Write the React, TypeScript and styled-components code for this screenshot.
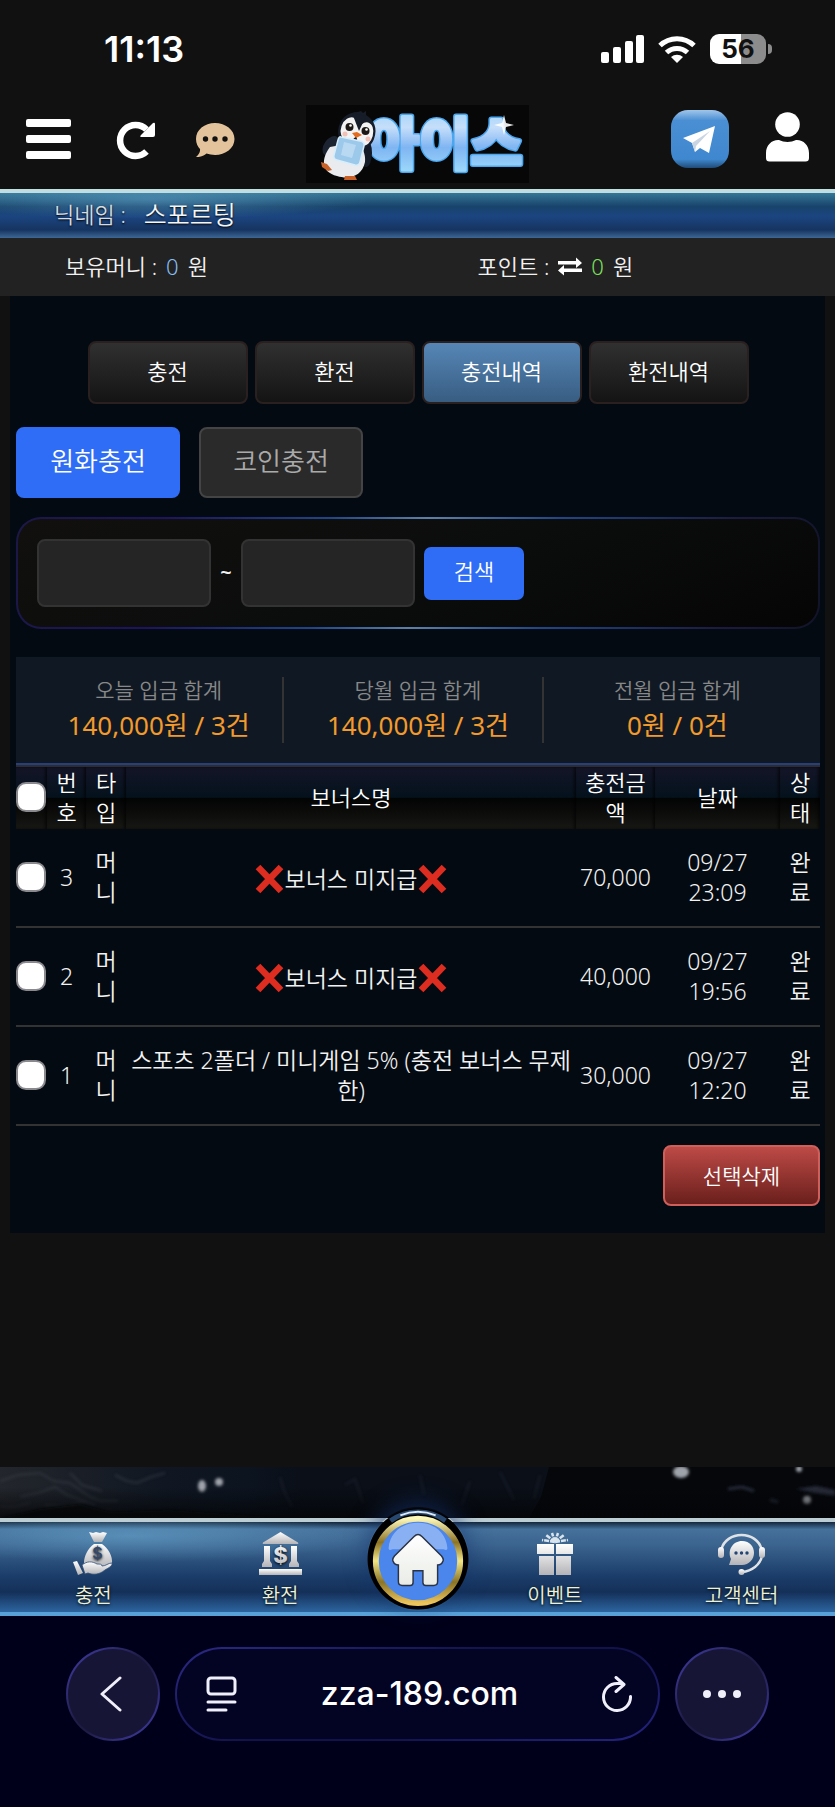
import { useState } from "react";
import styled, { createGlobalStyle } from "styled-components";

const GlobalStyle = createGlobalStyle`
  * {
    box-sizing: border-box;
  }
  body {
    margin: 0;
    background: #111111;
    color: #f2f2f2;
    font-family: "Noto Sans", "Noto Sans CJK KR", sans-serif;
    font-size: 22px;
    font-weight: 350;
    line-height: 30px;
  }
  button, input {
    font: inherit;
    color: inherit;
    padding: 0;
  }
  button {
    cursor: pointer;
  }
  a {
    color: inherit;
    text-decoration: none;
  }
  svg {
    display: block;
    flex: none;
  }
`;

const Page = styled.div`
  display: flex;
  flex-direction: column;
  min-height: 100vh;
`;

/* phone status bar */

const StatusBar = styled.div`
  display: flex;
  align-items: center;
  justify-content: space-between;
  height: 98px;
  padding: 0 63px 0 104px;
  font-family: Inter, sans-serif;
  color: white;
`;

const Clock = styled.span`
  font-size: 36px;
  font-weight: 600;
`;

const StatusIcons = styled.div`
  display: flex;
  align-items: center;
  gap: 14px;
`;

const Battery = styled.div`
  display: flex;
  align-items: center;
  gap: 2px;
`;

const BatteryBody = styled.span`
  width: 56px;
  height: 30px;
  border-radius: 9px;
  background: linear-gradient(90deg, white 56%, #8c8c8c 56%);
  color: #111111;
  font-size: 26px;
  font-weight: 700;
  line-height: 30px;
  text-align: center;
`;

const BatteryTip = styled.span`
  width: 4px;
  height: 10px;
  border-radius: 0 4px 4px 0;
  background: #8c8c8c;
`;

/* site header */

const Header = styled.header`
  display: grid;
  grid-template-columns: 1fr auto 1fr;
  align-items: center;
  height: 91px;
  padding: 0 26px;
`;

const HeaderSide = styled.div<{ $end?: boolean; $gap: number }>`
  display: flex;
  align-items: center;
  justify-content: ${(p) => (p.$end ? "flex-end" : "flex-start")};
  gap: ${(p) => p.$gap}px;
  padding-bottom: 10px;
`;

const IconButton = styled.button`
  display: flex;
  border: none;
  background: none;
`;

const Logo = styled.a`
  display: block;
  background: #070707;
  svg {
    overflow: visible;
  }
`;

const UserBar = styled.div`
  display: flex;
  align-items: center;
  gap: 18px;
  height: 49px;
  padding: 0 54px 3px;
  border-top: 4px solid #c0dde2;
  background:
    radial-gradient(ellipse 220px 20px at 150px 6px, rgba(100, 165, 205, 0.5), transparent),
    linear-gradient(#357796, #18436a 30%, #1b4580 52%, #163460 82%, #3d6795);
  color: #d6dbe0;
  text-shadow: 0 1px 2px black;
`;

const Nickname = styled.span`
  font-size: 25px;
  color: #f4f6f8;
`;

const MoneyBar = styled.div`
  display: grid;
  grid-template-columns: 1fr 1fr;
  height: 58px;
  padding-bottom: 2px;
  background: #222222;
`;

const Money = styled.div<{ $inset: number }>`
  display: flex;
  align-items: center;
  gap: 9px;
  padding-left: ${(p) => p.$inset}px;
`;

const Amount = styled.span<{ $color: string }>`
  color: ${(p) => p.$color};
`;

/* content panel */

const Panel = styled.main`
  margin: 0 10px;
  padding: 45px 5px 27px 6px;
  background: #030a11;
`;

const Tabs = styled.nav`
  display: flex;
  gap: 7px;
  justify-content: center;
`;

const Tab = styled.button<{ $active: boolean }>`
  flex: 0 1 160px;
  height: 63px;
  padding-bottom: 4px;
  border: 2px solid #2a2020;
  border-radius: 8px;
  background: ${(p) =>
    p.$active ? "linear-gradient(#5686b6, #385d82)" : "linear-gradient(#303030, #141414)"};
  color: white;
`;

const Kinds = styled.div`
  display: flex;
  gap: 19px;
  margin-top: 23px;
`;

const Kind = styled.button<{ $active: boolean }>`
  width: 164px;
  height: 71px;
  padding-bottom: 4px;
  border: 2px solid ${(p) => (p.$active ? "#2f6df6" : "#444444")};
  border-radius: 8px;
  background: ${(p) => (p.$active ? "#2f6df6" : "#2a2a2a")};
  color: ${(p) => (p.$active ? "white" : "#aaaaaa")};
  font-size: 26px;
`;

const Search = styled.form`
  display: flex;
  align-items: center;
  gap: 9px;
  height: 112px;
  margin-top: 19px;
  padding: 0 19px;
  border: 2px solid transparent;
  border-radius: 25px;
  background:
    linear-gradient(160deg, #11100e, #0b0d0c 50%, #050505) padding-box,
    linear-gradient(100deg, #1b1846, #1d1460 18%, #1f4588 38%, #5c81a8 50%, #214687 66%, #1c1b3f 88%, #111428) border-box;
`;

const DateInput = styled.input`
  width: 174px;
  height: 68px;
  border: 2px solid #333333;
  border-radius: 8px;
  background: #252525;
  text-align: center;
`;

const Tilde = styled.span`
  width: 12px;
  font-size: 20px;
  font-weight: 600;
  text-align: center;
`;

const SearchButton = styled.button`
  width: 100px;
  height: 53px;
  padding-bottom: 4px;
  border: none;
  border-radius: 7px;
  background: #2f6df6;
  color: white;
`;

const Summary = styled.dl`
  display: grid;
  grid-template-columns: repeat(3, 1fr);
  height: 108px;
  margin: 28px 0 0;
  padding: 20px 13px;
  border-bottom: 2px solid #27407a;
  background: #101923;
  text-align: center;
`;

const Sum = styled.div`
  display: flex;
  flex-direction: column;
  gap: 3px;
  height: 66px;
  margin-right: 4px;
  padding-left: 6px;
  border-right: 2px solid #333333;
  &:last-child {
    border-color: transparent;
  }
`;

const SumLabel = styled.dt`
  height: 28px;
  font-size: 21px;
  line-height: 26px;
  color: #888888;
`;

const SumValue = styled.dd`
  margin: 0;
  color: #f39a2c;
  font-size: 26px;
  font-weight: 400;
  line-height: 34px;
`;

const Table = styled.table`
  width: 100%;
  border-collapse: separate;
  border-spacing: 0;
  table-layout: fixed;
  text-align: center;
  word-break: break-all;
`;

const HeadCell = styled.th<{ $width?: number; $tight?: boolean }>`
  width: ${(p) => (p.$width ? p.$width + "px" : "auto")};
  height: 64px;
  padding: 0 ${(p) => (p.$tight ? 0 : 5)}px 2px;
  border-top: 2px solid #2c2c33;
  background: linear-gradient(#141528, #04121c 49%, #020303 50%, #171714);
  box-shadow: inset -2px 0 3px rgba(0, 0, 0, 0.6);
  color: white;
  font-weight: 350;
`;

const Cell = styled.td<{ $tight?: boolean }>`
  height: 99px;
  padding: 0 ${(p) => (p.$tight ? 0 : 5)}px 2px;
  border-bottom: 2px solid #333333;
  font-size: 23px;
  vertical-align: middle;
`;

const Bonus = styled.span`
  display: flex;
  align-items: center;
  justify-content: center;
  padding-top: 5px;
`;

const Check = styled.input`
  display: block;
  width: 30px;
  height: 30px;
  margin: 0;
  appearance: none;
  border: 2px solid #8a8a8e;
  border-radius: 10px;
  background: white;
  &:checked {
    background: #2f6df6;
  }
`;

const Actions = styled.div`
  display: flex;
  justify-content: flex-end;
  margin-top: 19px;
`;

const DeleteButton = styled.button`
  width: 157px;
  height: 61px;
  border: 2px solid #cf5f5b;
  border-radius: 8px;
  background: linear-gradient(#bd4a46, #6a1f1c);
  color: white;
  font-size: 21px;
`;

/* bottom navigation */

const Scenery = styled.div`
  height: 51px;
  margin-top: auto;
  overflow: hidden;
  background: #05070b;
`;

const BottomNav = styled.nav`
  position: relative;
  display: grid;
  grid-template-columns: 1fr 1fr 88px 1fr 1fr;
  height: 98px;
  border-top: 4px solid #bccdd3;
  border-bottom: 4px solid #58a1d8;
  background:
    radial-gradient(ellipse 240px 26px at 130px 14px, rgba(110, 175, 215, 0.5), transparent),
    linear-gradient(#14263c, #45719b 8%, #3b648f 25%, #1b3d69 60%, #143059 78%, #2c659f);
`;

const NavItem = styled.a`
  display: flex;
  flex-direction: column;
  align-items: center;
  gap: 6px;
  padding-top: 10px;
  color: #edf2d6;
  font-size: 20px;
  text-shadow: 0 1px 3px black;
`;

const HomeLink = styled.a`
  position: absolute;
  top: -15px;
  left: 50%;
  margin-left: -51px;
  border-radius: 50%;
  box-shadow: 0 -6px 22px rgba(20, 50, 110, 0.6);
`;

/* browser chrome */

const BrowserBar = styled.div`
  display: flex;
  gap: 15px;
  height: 191px;
  padding: 31px 66px 0;
  background: #00001a;
  color: #f0f0fa;
`;

const RoundButton = styled.button`
  display: flex;
  flex: none;
  align-items: center;
  justify-content: center;
  width: 94px;
  height: 94px;
  border: 2px solid transparent;
  border-radius: 50%;
  background:
    linear-gradient(#171536, #171536) padding-box,
    linear-gradient(135deg, #4540b0, #1e1b44 45%, #1e1b44 55%, #4540b0) border-box;
`;

const Address = styled.div`
  display: flex;
  flex: 1;
  align-items: center;
  height: 94px;
  padding: 0 26px 0 29px;
  border: 2px solid transparent;
  border-radius: 47px;
  background:
    linear-gradient(#030324, #030324) padding-box,
    linear-gradient(160deg, #2c2a85, #13124a 45%, #13124a 60%, #252480) border-box;
`;

const Url = styled.span`
  flex: 1;
  color: white;
  font-family: Inter, sans-serif;
  font-size: 32px;
  font-weight: 500;
  text-align: center;
`;

const SignalIcon = () => (
  <svg width="43" height="28" fill="white">
    <rect x="0" y="17" width="8" height="11" rx="2" />
    <rect x="12" y="12" width="8" height="16" rx="2" />
    <rect x="24" y="6" width="8" height="22" rx="2" />
    <rect x="35" y="0" width="8" height="28" rx="2" />
  </svg>
);

const WifiIcon = () => (
  <svg width="38" height="28" viewBox="0 0 38 28" fill="none" stroke="white" strokeWidth="5">
    <path d="M2 10.500a24.500 24.500 0 0 1 34 0" />
    <path d="M8.500 17.500a15.500 15.500 0 0 1 21 0" />
    <path d="M13 22a9.500 9.500 0 0 1 12 0L19 28z" fill="white" stroke="none" />
  </svg>
);

const MenuIcon = () => (
  <svg width="45" height="40" fill="white">
    <rect y="0" width="45" height="8" rx="2" />
    <rect y="16" width="45" height="8" rx="2" />
    <rect y="32" width="45" height="8" rx="2" />
  </svg>
);

const ReloadIcon = () => (
  <svg width="43" height="44" viewBox="-4 -4 43 44">
    <path d="M30.500 8.500a15.500 15.500 0 1 0 0 22" fill="none" stroke="white" strokeWidth="6.500" />
    <path d="M37 2q2-1 2 1v11q0 2-2 2H26q-3 0-1-2z" fill="white" />
  </svg>
);

const ChatIcon = () => (
  <svg width="40" height="36" viewBox="1 -1 40 36">
    <path
      d="M20 1C9.500 1 1 7.800 1 17c0 4.500 2 8 4 10 .5 3-1.500 6-4 8 4.500.3 8-1 10.500-3.400C14 32.500 17 33 20 33c10.500 0 19.500-6.800 19.500-16S30.500 1 20 1z"
      fill="#e3c39c"
    />
    <circle cx="10.500" cy="17" r="2.700" fill="#111111" />
    <circle cx="20" cy="17" r="2.700" fill="#111111" />
    <circle cx="30" cy="17" r="2.700" fill="#111111" />
  </svg>
);

const PersonIcon = () => (
  <svg width="43" height="54" viewBox="0 0 43 54" fill="white">
    <circle cx="21.500" cy="12.500" r="12.300" />
    <path d="M13 28c5 2.600 12 2.600 17 0 7-.5 13 5 13 13v5q0 3.500-3.500 3.500h-36Q0 49.500 0 46v-5c0-8 6-13.500 13-13z" />
  </svg>
);

const TelegramIcon = () => (
  <svg width="58" height="58" viewBox="0 0 58 58">
    <defs>
      <linearGradient id="tg" x2="0" y2="1">
        <stop offset="0" stopColor="#a0c6ea" />
        <stop offset=".18" stopColor="#4a8fd3" />
        <stop offset=".85" stopColor="#3f87cf" />
        <stop offset="1" stopColor="#204b78" />
      </linearGradient>
    </defs>
    <rect width="58" height="58" rx="17" fill="url(#tg)" />
    <path d="M12 28l32-12-6 27-9-5-5 4-3-9z" fill="white" />
    <path d="M21 33l18-12-14 15-1 6z" fill="#c9d5e2" />
  </svg>
);

const SwapIcon = () => (
  <svg width="24" height="19" viewBox="0 0 24 19" fill="white">
    <path d="M0 4h18V.5L24 6l-6 5V7.500H0z" />
    <path d="M24 11.500H6V8L0 13.500l6 5V15h18z" />
  </svg>
);

const CrossIcon = () => (
  <svg width="31" height="30" viewBox="0 0 31 30" role="img" aria-label="❌">
    <path d="M4 3l23 24M27 3L4 27" stroke="#dd2c20" strokeWidth="6.500" />
  </svg>
);

const LogoArt = () => (
  <svg width="223" height="78" viewBox="0 0 223 78" role="img" aria-label="아이스">
    <defs>
      <linearGradient id="ice" x2="0" y2="1">
        <stop offset="0" stopColor="#8fd0fb" />
        <stop offset=".35" stopColor="#c5defa" />
        <stop offset=".6" stopColor="#7fb5f2" />
        <stop offset="1" stopColor="#a7e4fd" />
      </linearGradient>
    </defs>
    <g
      fontFamily="'Noto Sans CJK KR', sans-serif"
      fontSize="56"
      fontWeight="900"
      strokeLinejoin="round"
      textAnchor="middle"
    >
      <text x="139" y="59" fill="#3c93e2" stroke="#4aa6ee" strokeWidth="6">아이스</text>
      <text x="139" y="59" fill="url(#ice)" stroke="url(#ice)" strokeWidth="3" aria-hidden="true">아이스</text>
    </g>
    <path d="M198 10l2 8 8 2-8 2-2 8-2-8-8-2 8-2z" fill="white" opacity=".9" />
    {/* penguin holding an ice cube */}
    <ellipse cx="25" cy="41" rx="7" ry="11" fill="#1c2431" transform="rotate(35 25 41)" />
    <ellipse cx="60" cy="48" rx="6" ry="14" fill="#141b27" />
    <path d="M24 42c-9 12-9 25 7 29 13 4 25 0 28-14 1-8-3-16-8-20z" fill="#e9ebee" />
    <path d="M32 27C33 13 42 7 52 7l3-1 2 2 3-2v4c8 5 12 13 8 24-4 10-13 12-22 8-8-3-14-8-14-15z" fill="#161c28" />
    <ellipse cx="44" cy="24" rx="9" ry="12" fill="#f3f3f4" transform="rotate(20 44 24)" />
    <ellipse cx="59" cy="29" rx="8" ry="12" fill="#f3f3f4" transform="rotate(15 59 29)" />
    <path d="M46 8l14 3-7 15z" fill="#161c28" />
    <circle cx="43.500" cy="22" r="4" fill="#1d1715" />
    <circle cx="59.500" cy="26" r="4" fill="#1d1715" />
    <circle cx="44.500" cy="20.500" r="1.300" fill="white" />
    <circle cx="60.500" cy="24.500" r="1.300" fill="white" />
    <circle cx="39" cy="29" r="2.500" fill="#f3c0b5" />
    <circle cx="62" cy="34" r="2.500" fill="#f3c0b5" />
    <path d="M46 28l5-1 5 3-6 3z" fill="#e36b1e" />
    <path d="M35 32l19 4q5 1 4 5l-4 16q-1 4-5 3l-18-5q-4-1-3-5l4-15q1-4 3-3z" fill="#9cc8ea" stroke="#d6edfb" strokeWidth="1.500" />
    <path d="M38 37l12 3-4 13-11-3z" fill="#b9d9f2" />
    <path d="M15 57l6 2 5 6-4 1-6-4z" fill="#c8622a" />
    <path d="M39 71h10l2 4H38z" fill="#c8622a" />
  </svg>
);

const IceScene = () => (
  <svg width="100%" height="51" viewBox="0 0 835 51" preserveAspectRatio="none">
    <defs>
      <linearGradient id="cliff" x2="1">
        <stop offset="0" stopColor="#23262c" />
        <stop offset=".3" stopColor="#101722" />
        <stop offset=".45" stopColor="#0c1420" />
        <stop offset=".55" stopColor="#0a0f18" />
      </linearGradient>
      <linearGradient id="shade" x2="0" y2="1">
        <stop offset=".4" stopColor="#030406" stopOpacity="0" />
        <stop offset="1" stopColor="#030406" stopOpacity=".8" />
      </linearGradient>
      <filter id="soft">
        <feGaussianBlur stdDeviation="1.500" />
      </filter>
    </defs>
    <path d="M0 0h549l-8 30-12 21H0z" fill="url(#cliff)" />
    <g filter="url(#soft)" stroke="#3c424c" strokeWidth="2" fill="none" opacity=".5">
      <path d="M0 14l18-6 22-2 14 8 16 2 20 14 10 4 18 0M20 30l18-4 17-6 12 8 28 10M115 8l12 6 10 2 14-6 14-4M0 40l14 0 16-4M70 6l12 12 20 6M45 38l22 2 20-6" />
      <path d="M280 10l4 14 8 16M345 18l10-6 8 24M500 5l6 12 8 16M470 14l-8 24M420 8l4 20M540 8l-6 24" strokeOpacity=".5" />
    </g>
    <path d="M0 51l40-9 40-5 30 8 60-2 120 8z" fill="#07090c" filter="url(#soft)" />
    <g filter="url(#soft)" fill="#9fa3aa">
      <ellipse cx="202" cy="19" rx="4" ry="6" />
      <circle cx="219" cy="15" r="4" />
      <ellipse cx="681" cy="5" rx="8" ry="6" />
      <circle cx="799" cy="2" r="3" />
      <circle cx="807" cy="33" r="4" />
      <path d="M796 22l20-3 19 4v6l-20-3z" fill="#252a38" />
      <path d="M728 22l14-2 12 4M770 33l8 2" fill="none" stroke="#252a38" strokeWidth="3" />
    </g>
    <path d="M0 0h835v51H0z" fill="url(#shade)" />
  </svg>
);

const IconFill = () => (
  <svg width="0" height="0" aria-hidden="true">
    <defs>
      <linearGradient id="silver" x2="0" y2="1">
        <stop offset="0" stopColor="#ffffff" />
        <stop offset="1" stopColor="#b4b4b8" />
      </linearGradient>
    </defs>
  </svg>
);

const DepositIcon = () => (
  <svg width="40" height="43" viewBox="0 0 40 43" fill="url(#silver)">
    <path d="M16 0l4 1 3-1 4 1 3-1 4 1-5 9H21z" />
    <path d="M21 12h8c6 4 11 12 10 20-5 1-8 5-14 3-6-1-13 0-14-4 0-7 4-15 10-19z" />
    <path
      d="M9 33c5-4 10-4 15-1 3 0 5 0 5 2 4 0 6-3 10-3 1 3-4 5-7 7-6 5-12 5-17 3l-3 1z"
      stroke="#2c4c77"
      strokeWidth=".8"
    />
    <path d="M0 30l4-1 6 12-5 2z" />
    <text x="24.500" y="27" fill="#33486a" fontFamily="Inter, sans-serif" fontSize="16" fontWeight="600" textAnchor="middle">$</text>
  </svg>
);

const WithdrawIcon = () => (
  <svg width="43" height="43" viewBox="0 0 43 43" fill="url(#silver)">
    <path d="M21.500 0L39 10.500q1 1.500-1 1.500H5q-2 0-1-1.500z" />
    <path d="M5 14h6v15l2 3v3H3v-3l2-3zM32 14h6v15l2 3v3H30v-3l2-3z" />
    <path d="M0 37h43v6H0z" />
    <text x="21.500" y="31" fontFamily="Inter, sans-serif" fontSize="22" fontWeight="800" textAnchor="middle">$</text>
  </svg>
);

const EventIcon = () => (
  <svg width="36" height="43" viewBox="0 0 36 43" fill="url(#silver)">
    <path d="M0 12h17v10H0zM19 12h17v10H19zM2 24h15v19H2zM19 24h15v19H19z" />
    <path d="M18 10L5 8M18 10L9 3M18 10L15 1M18 10l3-9M18 10l9-7M18 10l13-2" stroke="#d9e4ec" strokeWidth="2.500" strokeDasharray="5 1" />
  </svg>
);

const SupportIcon = () => (
  <svg width="47" height="43" viewBox="0 0 47 43" fill="url(#silver)">
    <path d="M3.500 17a20.500 18 0 0 1 40 0M44 24c-2 9-10 15-20 16" fill="none" stroke="#dfe3e7" strokeWidth="2.500" />
    <rect x="0" y="15" width="6" height="11" rx="3" />
    <rect x="41" y="15" width="6" height="11" rx="3" />
    <circle cx="23.500" cy="40" r="3" />
    <path d="M24 9c8 0 12 6 12 12s-5 12-12 12H11l2-6c-4-9 2-18 11-18z" />
    <g fill="#234574">
      <circle cx="18" cy="21" r="1.700" />
      <circle cx="23.500" cy="21" r="1.700" />
      <circle cx="29" cy="21" r="1.700" />
    </g>
  </svg>
);

const HomeIcon = () => (
  <svg width="102" height="104" viewBox="0 0 104 104">
    <defs>
      <linearGradient id="gold" x2="0" y2="1">
        <stop offset="0" stopColor="#fdf7b8" />
        <stop offset=".28" stopColor="#8d7426" />
        <stop offset=".5" stopColor="#f3e684" />
        <stop offset=".75" stopColor="#8a7428" />
        <stop offset="1" stopColor="#ecc45c" />
      </linearGradient>
      <linearGradient id="roof" x2="0" y2="1">
        <stop offset="0" stopColor="#ffffff" />
        <stop offset="1" stopColor="#e9ece6" />
      </linearGradient>
    </defs>
    <circle cx="52" cy="52" r="51.500" fill="black" />
    <path d="M24 13a48 48 0 0 1 56 0" fill="none" stroke="#27476f" strokeWidth="5" />
    <path d="M34 7.500a48 48 0 0 1 36 0" fill="none" stroke="#dfeaf6" strokeWidth="2" />
    <circle cx="52" cy="54" r="43" fill="#4a86ec" stroke="url(#gold)" strokeWidth="6" />
    <path d="M22 41c1-16 14-26 30-26s29 10 30 26q0 3-4 1H26q-4 2-4-1z" fill="white" opacity=".35" />
    <path
      d="M52 27q2 0 4 2l20 20q3 4 1 6-1 3-5 3v17q0 4-4 4H60q-3 0-3-3V64H47v12q0 3-3 3h-8q-4 0-4-4V58q-4 0-5-3-2-2 1-6l20-20q2-2 4-2z"
      fill="url(#roof)"
      stroke="#2a3346"
      strokeWidth="1.500"
    />
  </svg>
);

const BackIcon = () => (
  <svg width="27" height="36" fill="none" stroke="#f0f0fa" strokeWidth="3" strokeLinecap="round" strokeLinejoin="round">
    <path d="M20 2L2 18l18 16" />
  </svg>
);

const ReaderIcon = () => (
  <svg width="31" height="36" viewBox="0 0 31 36" fill="none" stroke="#f0f0fa" strokeWidth="3" strokeLinecap="round">
    <rect x="2" y="2" width="27" height="16" rx="3" />
    <path d="M2 26h27M2 34h18" />
  </svg>
);

const RefreshIcon = () => (
  <svg width="30" height="36" viewBox="0 0 30 36" fill="none" stroke="#f0f0fa" strokeWidth="3" strokeLinecap="round" strokeLinejoin="round">
    <path d="M28.500 20.500A13.500 13.500 0 1 1 15 7.500h6M14 1.500l8 7-8 7" />
  </svg>
);

const MoreIcon = () => (
  <svg width="38" height="8" fill="#f0f0fa">
    <circle cx="4" cy="4" r="4" />
    <circle cx="19" cy="4" r="4" />
    <circle cx="34" cy="4" r="4" />
  </svg>
);

// one line of the deposit history
interface Deposit {
  id: number;
  type: string;
  bonus: string;
  noBonus?: boolean;
  amount: number;
  date: string;
  time: string;
  state: string;
}

const deposits: Deposit[] = [
  { id: 3, type: "머니", bonus: "보너스 미지급", noBonus: true, amount: 70000, date: "09/27", time: "23:09", state: "완료" },
  { id: 2, type: "머니", bonus: "보너스 미지급", noBonus: true, amount: 40000, date: "09/27", time: "19:56", state: "완료" },
  { id: 1, type: "머니", bonus: "스포츠 2폴더 / 미니게임 5% (충전 보너스 무제한)", amount: 30000, date: "09/27", time: "12:20", state: "완료" },
];

const sums = [
  { label: "오늘 입금 합계", value: "140,000원 / 3건" },
  { label: "당월 입금 합계", value: "140,000원 / 3건" },
  { label: "전월 입금 합계", value: "0원 / 0건" },
];

const tabs = ["충전", "환전", "충전내역", "환전내역"];
const kinds = ["원화충전", "코인충전"];

const App = () => {
  const [tab, setTab] = useState("충전내역");
  const [kind, setKind] = useState("원화충전");
  const [checked, setChecked] = useState<number[]>([]);

  const toggle = (id: number) =>
    setChecked(checked.includes(id) ? checked.filter((c) => c !== id) : [...checked, id]);

  const toggleAll = () =>
    setChecked(checked.length === deposits.length ? [] : deposits.map((d) => d.id));

  return (
    <Page>
      <GlobalStyle />
      <IconFill />
      <StatusBar>
        <Clock>11:13</Clock>
        <StatusIcons>
          <SignalIcon />
          <WifiIcon />
          <Battery>
            <BatteryBody>56</BatteryBody>
            <BatteryTip />
          </Battery>
        </StatusIcons>
      </StatusBar>

      <Header>
        <HeaderSide $gap={41}>
          <IconButton aria-label="메뉴"><MenuIcon /></IconButton>
          <IconButton aria-label="새로고침"><ReloadIcon /></IconButton>
          <IconButton aria-label="쪽지"><ChatIcon /></IconButton>
        </HeaderSide>
        <Logo href="#"><LogoArt /></Logo>
        <HeaderSide $end $gap={37}>
          <IconButton aria-label="텔레그램"><TelegramIcon /></IconButton>
          <IconButton aria-label="내 정보"><PersonIcon /></IconButton>
        </HeaderSide>
      </Header>

      <UserBar>
        <span>닉네임 :</span>
        <Nickname>스포르팅</Nickname>
      </UserBar>
      <MoneyBar>
        <Money $inset={65}>
          보유머니 : <Amount $color="#86bdf2">0</Amount> 원
        </Money>
        <Money $inset={60}>
          포인트 : <SwapIcon /> <Amount $color="#7be05a">0</Amount> 원
        </Money>
      </MoneyBar>

      <Panel>
        <Tabs>
          {tabs.map((t) => (
            <Tab key={t} $active={t === tab} onClick={() => setTab(t)}>
              {t}
            </Tab>
          ))}
        </Tabs>
        <Kinds>
          {kinds.map((k) => (
            <Kind key={k} $active={k === kind} onClick={() => setKind(k)}>
              {k}
            </Kind>
          ))}
        </Kinds>
        <Search onSubmit={(e) => e.preventDefault()}>
          <DateInput type="text" aria-label="시작일" />
          <Tilde>~</Tilde>
          <DateInput type="text" aria-label="종료일" />
          <SearchButton>검색</SearchButton>
        </Search>
        <Summary>
          {sums.map((s) => (
            <Sum key={s.label}>
              <SumLabel>{s.label}</SumLabel>
              <SumValue>{s.value}</SumValue>
            </Sum>
          ))}
        </Summary>
        <Table>
          <thead>
            <tr>
              <HeadCell $width={31} $tight>
                <Check
                  type="checkbox"
                  aria-label="전체 선택"
                  checked={checked.length === deposits.length}
                  onChange={toggleAll}
                />
              </HeadCell>
              <HeadCell $width={39}>번호</HeadCell>
              <HeadCell $width={40}>타입</HeadCell>
              <HeadCell>보너스명</HeadCell>
              <HeadCell $width={79}>충전금액</HeadCell>
              <HeadCell $width={125}>날짜</HeadCell>
              <HeadCell $width={40}>상태</HeadCell>
            </tr>
          </thead>
          <tbody>
            {deposits.map((d) => (
              <tr key={d.id}>
                <Cell $tight>
                  <Check
                    type="checkbox"
                    aria-label={`${d.id}번 선택`}
                    checked={checked.includes(d.id)}
                    onChange={() => toggle(d.id)}
                  />
                </Cell>
                <Cell>{d.id}</Cell>
                <Cell>{d.type}</Cell>
                <Cell $tight>
                  {d.noBonus ? (
                    <Bonus>
                      <CrossIcon />
                      {d.bonus}
                      <CrossIcon />
                    </Bonus>
                  ) : (
                    d.bonus
                  )}
                </Cell>
                <Cell $tight>{d.amount.toLocaleString("en-US")}</Cell>
                <Cell>
                  {d.date}
                  <br />
                  {d.time}
                </Cell>
                <Cell>{d.state}</Cell>
              </tr>
            ))}
          </tbody>
        </Table>
        <Actions>
          <DeleteButton>선택삭제</DeleteButton>
        </Actions>
      </Panel>

      <Scenery>
        <IceScene />
      </Scenery>
      <BottomNav>
        <NavItem href="#"><DepositIcon />충전</NavItem>
        <NavItem href="#"><WithdrawIcon />환전</NavItem>
        <span />
        <NavItem href="#"><EventIcon />이벤트</NavItem>
        <NavItem href="#"><SupportIcon />고객센터</NavItem>
        <HomeLink href="#" aria-label="홈"><HomeIcon /></HomeLink>
      </BottomNav>
      <BrowserBar>
        <RoundButton aria-label="뒤로"><BackIcon /></RoundButton>
        <Address>
          <ReaderIcon />
          <Url>zza-189.com</Url>
          <RefreshIcon />
        </Address>
        <RoundButton aria-label="더보기"><MoreIcon /></RoundButton>
      </BrowserBar>
    </Page>
  );
};

export default App;
